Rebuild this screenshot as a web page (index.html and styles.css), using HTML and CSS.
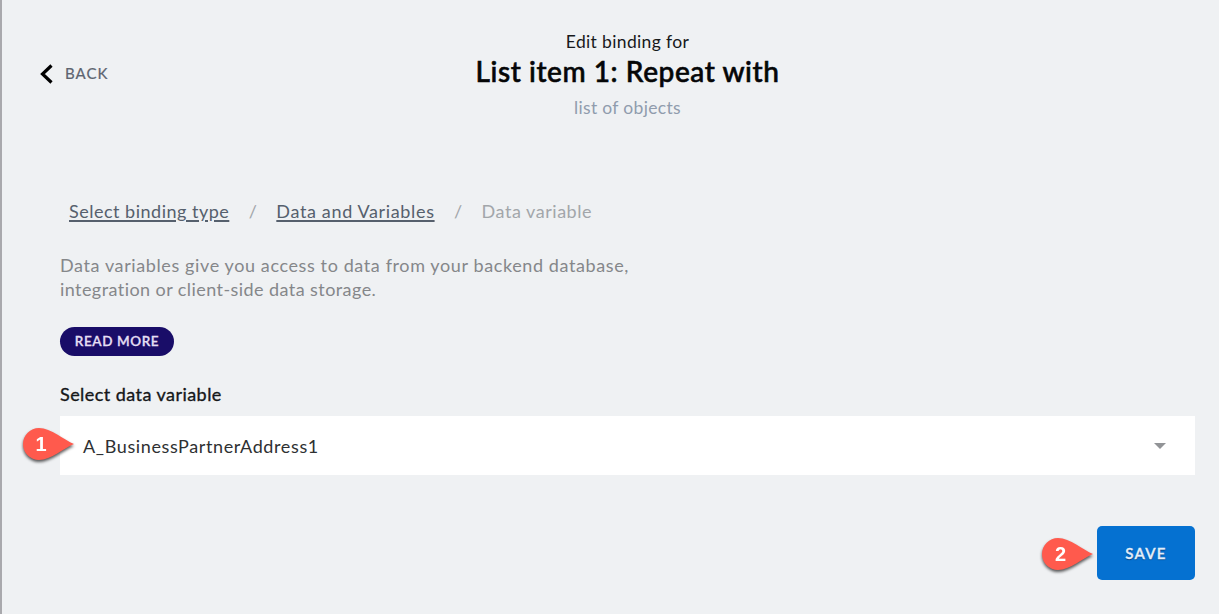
FILE: index.html
```
<!DOCTYPE html>
<html lang="en">
<head>
<meta charset="utf-8">
<title>Edit binding</title>
<link rel="stylesheet" href="styles.css">
</head>
<body>
<main class="panel">
  <header class="header">
    <a class="back"><svg class="back-icon" width="14" height="20" viewBox="0 0 14 20"><path d="M12.5 1.5 3.5 10l9 8.5" fill="none" stroke="#000" stroke-width="3.2"/></svg><span class="back-label">BACK</span></a>
    <div class="heading">
      <div class="eyebrow"><span>Edit binding for</span></div>
      <h1 class="title"><span>List item 1: Repeat with</span></h1>
      <div class="type"><span>list of objects</span></div>
    </div>
  </header>
  <nav class="crumbs">
    <a class="crumb crumb-first">Select binding type</a><span class="slash">/</span><a class="crumb crumb-second">Data and Variables</a><span class="slash">/</span><span class="current">Data variable</span>
  </nav>
  <p class="intro"><span class="intro-first">Data variables give you access to data from your backend database,</span><br><span class="intro-second">integration or client-side data storage.</span></p>
  <button class="more"><span>READ MORE</span></button>
  <div class="label"><span>Select data variable</span></div>
  <div class="select">
    <span class="value">A_BusinessPartnerAddress1</span>
    <svg class="caret" width="12" height="6" viewBox="0 0 12 6"><path d="M0 0h12L6 6z" fill="#929497"/></svg>
    <svg class="pin pin-one" width="60" height="44" viewBox="0 0 60 44"><path d="M55 20C45 24 32 36 20 36a16 16 0 1 1 0-32C32 4 45 16 55 20z" fill="#ff5a4d"/><text x="22" y="27" text-anchor="middle">1</text></svg>
  </div>
  <div class="actions">
    <button class="save"><span>SAVE</span></button>
    <svg class="pin pin-two" width="60" height="44" viewBox="0 0 60 44"><path d="M55 20C45 24 32 36 20 36a16 16 0 1 1 0-32C32 4 45 16 55 20z" fill="#ff5a4d"/><text x="22.5" y="27" text-anchor="middle">2</text></svg>
  </div>
</main>
</body>
</html>
```
FILE: styles.css
```
* { box-sizing: border-box; }
body { margin: 0; font-family: Lato, "Liberation Sans", sans-serif; background: #eff1f3; }
.panel { height: 614px; padding: 30px 24px 0 58px; border-left: 2px solid #a9a9ad; display: flex; flex-direction: column; align-items: flex-start; overflow: hidden; }
.header { width: 1135px; height: 169px; display: grid; grid-template-columns: 1fr 303px 1fr; }
.back { display: flex; align-items: center; gap: 12px; height: 20px; margin: 34px 0 0 -21px; }
.back-label { font-size: 15px; line-height: 18px; margin-top: -2px; color: #5d6470; letter-spacing: 1px; -webkit-text-stroke: .2px #5d6470; }
.heading { display: flex; flex-direction: column; align-items: center; white-space: nowrap; }
.eyebrow { font-size: 17.5px; line-height: 24px; color: #17191b; letter-spacing: .35px; }
.title { margin: -1px 0 1px; font-size: 28px; line-height: 37px; font-weight: 500; color: #050607; letter-spacing: .57px; -webkit-text-stroke: .6px #050607; }
.type { font-size: 17.5px; line-height: 34px; color: #909cad; letter-spacing: .33px; }
.crumbs { display: flex; align-items: center; height: 24px; padding-left: 9px; font-size: 18px; color: #a2a6aa; white-space: nowrap; }
.crumb { color: #56606d; text-decoration: underline; text-decoration-thickness: 1.5px; text-underline-offset: 2px; }
.crumb-first { letter-spacing: .5px; }
.crumb-second { letter-spacing: .65px; }
.current { letter-spacing: .53px; }
.slash { width: 47px; text-align: center; }
.intro { margin: 30px 0 0; font-size: 18px; line-height: 24px; color: #85878a; white-space: nowrap; }
.intro-first { letter-spacing: .61px; }
.intro-second { letter-spacing: .43px; }
button { border: 0; padding: 0; font-family: inherit; }
.more { width: 114px; height: 29px; margin-top: 26px; padding-bottom: 1px; border-radius: 15px; background: #190d68; color: #e4dff3; font-size: 13.5px; font-weight: 600; letter-spacing: .6px; -webkit-text-stroke: .3px #e4dff3; }
.label { margin-top: 26px; height: 24px; font-size: 18px; line-height: 24px; color: #151719; letter-spacing: .45px; -webkit-text-stroke: .35px #151719; }
.select { position: relative; display: flex; align-items: center; justify-content: space-between; width: 1135px; height: 59px; margin-top: 10px; padding: 0 29px 0 23px; background: #fff; font-size: 18px; color: #2e3032; letter-spacing: .62px; }
.actions { position: relative; width: 1135px; margin-top: 51px; display: flex; justify-content: flex-end; }
.save { width: 98px; height: 54px; border-radius: 5px; background: #0571d1; color: #e2effb; font-size: 15px; font-weight: 600; letter-spacing: 1.3px; text-shadow: 0 1px 1px #07407a; -webkit-text-stroke: .3px #e2effb; }
.pin { position: absolute; overflow: visible; filter: drop-shadow(0 2px 1.5px rgba(0,0,0,.65)); }
.pin text { font: 700 20px "Liberation Sans", sans-serif; letter-spacing: 0; fill: #fff; }
.pin-one { left: -41px; top: 8px; }
.pin-two { right: 97px; top: 8px; }
```
